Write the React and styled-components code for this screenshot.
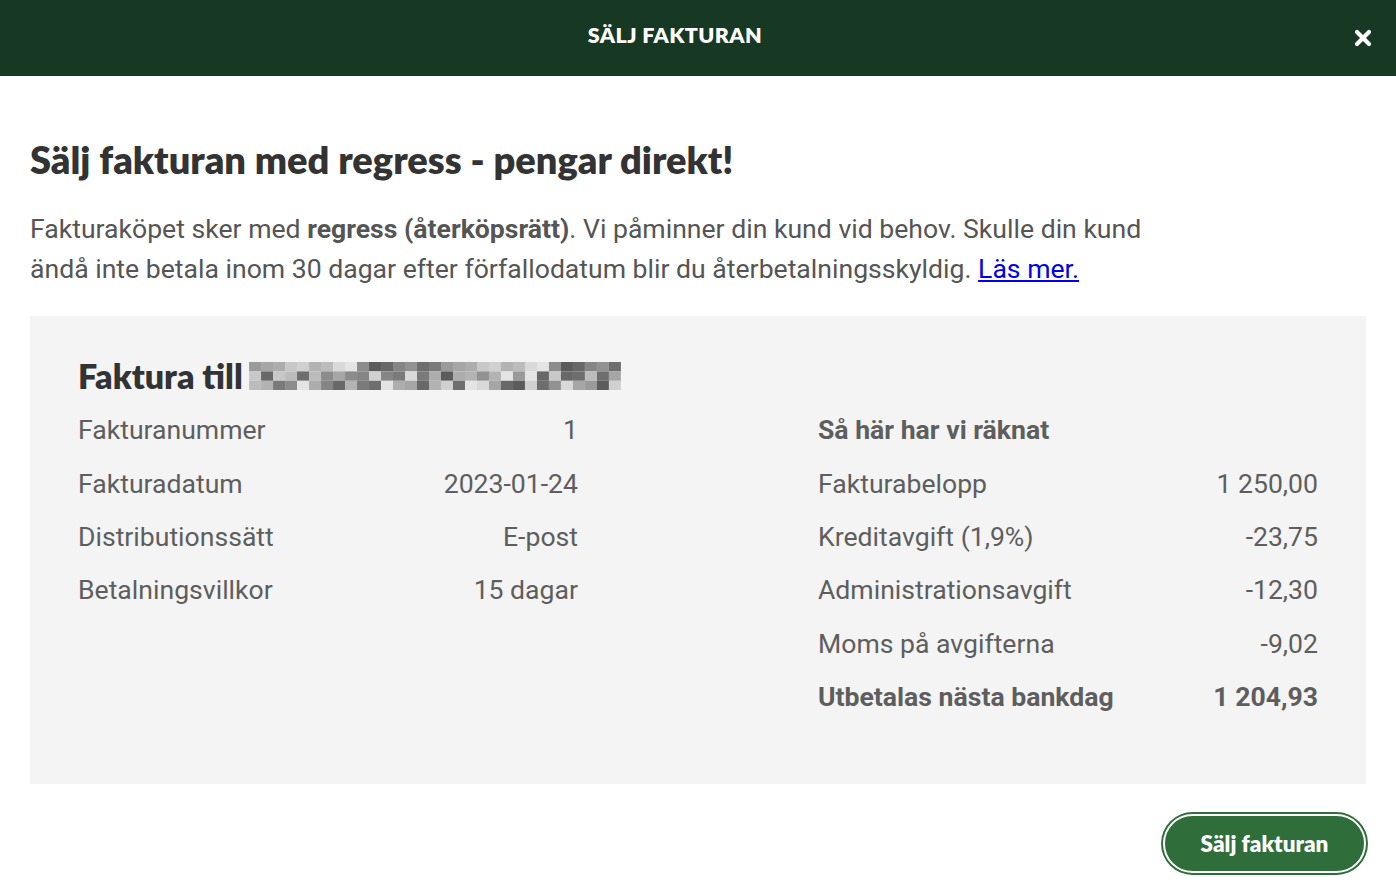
import React from "react";
import styled, { createGlobalStyle } from "styled-components";

const Global = createGlobalStyle`
  html, body { margin: 0; padding: 0; background: #fff; }
  body { font-family: Roboto, "Liberation Sans", sans-serif; }
`;

const Page = styled.div`
  width: 1396px;
  height: 890px;
  display: flex;
  flex-direction: column;
  overflow: hidden;
`;

const Header = styled.header`
  height: 76px;
  background: #173823;
  display: flex;
  align-items: center;
  justify-content: center;
  padding-right: 46px;
  position: relative;
  flex-shrink: 0;
`;

const HeaderTitle = styled.h1`
  margin: 0 0 6px;
  color: #fff;
  font-family: Lato, "Open Sans", sans-serif;
  font-weight: 800;
  font-size: 21.5px;
  letter-spacing: 0.4px;
`;

const Close = styled.button`
  position: absolute;
  right: 24px;
  top: 29px;
  width: 18px;
  height: 18px;
  padding: 0;
  border: 0;
  background: none;
  cursor: pointer;
  display: flex;
`;

const Body = styled.main`
  padding: 58px 30px 0;
  display: flex;
  flex-direction: column;
`;

const Title = styled.h2`
  margin: 0;
  font-family: Lato, "Open Sans", sans-serif;
  font-weight: 800;
  font-size: 38px;
  line-height: 50px;
  color: #333;
`;

const Intro = styled.p`
  margin: 25px 0 0;
  font-size: 26.6px;
  line-height: 40px;
  color: #555;
  max-width: 1140px;
  b { font-weight: 700; }
  a { color: #0000ee; }
`;

const Panel = styled.section`
  margin-top: 27px;
  background: #f4f4f4;
  padding: 40px 48px 60px;
  height: 468px;
  box-sizing: border-box;
`;

const PanelTitle = styled.h3`
  margin: 0;
  display: flex;
  align-items: center;
  gap: 6px;
  font-family: Lato, "Open Sans", sans-serif;
  font-weight: 800;
  font-size: 34px;
  line-height: 40px;
  color: #333;
`;

const Columns = styled.div`
  margin-top: 7px;
  display: grid;
  grid-template-columns: 500px 500px;
  column-gap: 240px;
`;

const List = styled.dl`
  margin: 0;
  display: grid;
  grid-template-columns: 1fr auto;
  grid-auto-rows: 53.4px;
  align-items: center;
  font-size: 26.6px;
  color: #5e5e5e;
`;

const Label = styled.dt`
  white-space: nowrap;
  font-weight: ${({ $bold }) => ($bold ? 700 : 400)};
`;

const Value = styled.dd`
  margin: 0;
  white-space: nowrap;
  text-align: right;
  font-weight: ${({ $bold }) => ($bold ? 700 : 400)};
`;

const Footer = styled.div`
  display: flex;
  justify-content: flex-end;
  padding: 30px 30px 0;
`;

const SellButton = styled.button`
  width: 203px;
  height: 59px;
  border-radius: 30px;
  background: #2f6e3a;
  border: 2px solid #fff;
  box-shadow: 0 0 0 2px #2f6e3a;
  color: #fff;
  font-family: Lato, "Open Sans", sans-serif;
  font-weight: 800;
  font-size: 22.5px;
  cursor: pointer;
  box-sizing: border-box;
`;

const shades = [
  "9a9a9a", "d9d9d9", "6e6e6e", "b3b3b3", "858585", "c8c8c8", "5c5c5c", "a6a6a6",
  "e4e4e4", "7a7a7a", "bcbcbc", "929292", "d0d0d0", "686868", "adadad", "8c8c8c",
];

const Blurred = () => {
  const cols = 31;
  const rows = 3;
  const cell = 12;
  const h = 9.4;
  return (
    <svg width={cols * cell} height={rows * h} viewBox={`0 0 ${cols * cell} ${rows * h}`}>
      {Array.from({ length: rows }, (_, y) =>
        Array.from({ length: cols }, (_, x) => (
          <rect
            key={`${x}-${y}`}
            x={x * cell}
            y={y * h}
            width={cell}
            height={h}
            fill={`#${shades[(x * 7 + y * 5 + ((x * y) % 3)) % shades.length]}`}
          />
        ))
      )}
    </svg>
  );
};

const invoice = [
  ["Fakturanummer", "1"],
  ["Fakturadatum", "2023-01-24"],
  ["Distributionssätt", "E-post"],
  ["Betalningsvillkor", "15 dagar"],
];

const calc = [
  ["Fakturabelopp", "1 250,00"],
  ["Kreditavgift (1,9%)", "-23,75"],
  ["Administrationsavgift", "-12,30"],
  ["Moms på avgifterna", "-9,02"],
];

export default function App() {
  return (
    <Page>
      <Global />
      <Header>
        <HeaderTitle>SÄLJ FAKTURAN</HeaderTitle>
        <Close aria-label="Stäng">
          <svg width="18" height="18" viewBox="0 0 18 18">
            <path d="M3 3 L15 15 M15 3 L3 15" stroke="#fff" strokeWidth="4.2" strokeLinecap="round" />
          </svg>
        </Close>
      </Header>
      <Body>
        <Title>Sälj fakturan med regress - pengar direkt!</Title>
        <Intro>
          Fakturaköpet sker med <b>regress (återköpsrätt)</b>. Vi påminner din kund vid behov. Skulle din kund
          ändå inte betala inom 30 dagar efter förfallodatum blir du återbetalningsskyldig.{" "}
          <a href="#">Läs mer.</a>
        </Intro>
        <Panel>
          <PanelTitle>
            Faktura till <Blurred />
          </PanelTitle>
          <Columns>
            <List>
              {invoice.map(([l, v]) => (
                <React.Fragment key={l}>
                  <Label>{l}</Label>
                  <Value>{v}</Value>
                </React.Fragment>
              ))}
            </List>
            <List>
              <Label $bold>Så här har vi räknat</Label>
              <Value />
              {calc.map(([l, v]) => (
                <React.Fragment key={l}>
                  <Label>{l}</Label>
                  <Value>{v}</Value>
                </React.Fragment>
              ))}
              <Label $bold>Utbetalas nästa bankdag</Label>
              <Value $bold>1 204,93</Value>
            </List>
          </Columns>
        </Panel>
      </Body>
      <Footer>
        <SellButton>Sälj fakturan</SellButton>
      </Footer>
    </Page>
  );
}
